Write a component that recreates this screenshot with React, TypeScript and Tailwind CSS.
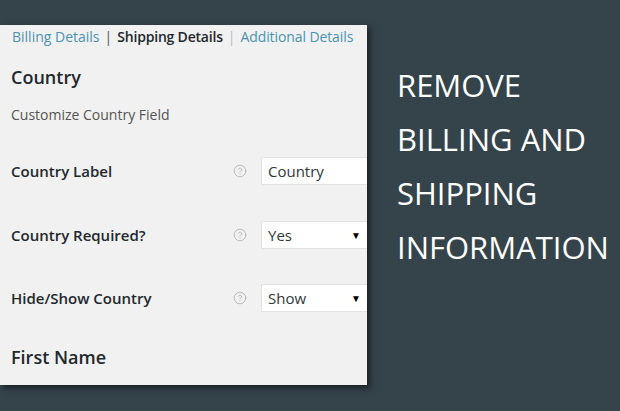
import { CircleHelp } from "lucide-react";

function HelpIcon() {
  return <CircleHelp className="w-[14px] h-[14px] text-[#b0b0b0]" strokeWidth={1.4} />;
}

function FieldRow({ label, value, select, className }: { label: string; value: string; select?: boolean; className: string }) {
  return (
    <div className={`flex items-center h-[28px] ${className}`}>
      <div className="w-[222px] shrink-0 text-[15px] font-semibold text-[#23282d]">{label}</div>
      <div className="w-[28px] shrink-0 flex items-center">
        <HelpIcon />
      </div>
      <div className="w-[200px] shrink-0 h-[28px] bg-white border border-[#e2e2e2] flex items-center justify-between pl-[6px] pr-[6px] text-[15px] text-[#32373c]">
        <span>{value}</span>
        {select && <span className="text-[10px] text-black mr-[93px]">▼</span>}
      </div>
    </div>
  );
}

export default function App() {
  return (
    <div className="w-[620px] h-[411px] bg-[#35434b] flex overflow-hidden" style={{ fontFamily: '"Open Sans", sans-serif' }}>
      <div className="w-[367px] h-[360px] mt-[25px] shrink-0 bg-[#f1f1f1] overflow-hidden shadow-[3px_3px_6px_rgba(0,0,0,0.55)] pl-[12px]">
        <div className="pt-[2px] h-[22px] leading-[20px] text-[14px] text-[#4b93b3] whitespace-nowrap">
          <span>Billing Details</span>
          <span className="text-[#555] mx-[5px]">|</span>
          <span className="font-semibold text-[#23282d] tracking-[-0.2px]">Shipping Details</span>
          <span className="text-[#bbb] mx-[5px]">|</span>
          <span className="tracking-[-0.1px]">Additional Details</span>
        </div>
        <div className="mt-[18px] -ml-[1px] text-[18px] leading-[24px] font-semibold text-[#23282d]">Country</div>
        <div className="mt-[16px] -ml-[1px] text-[14px] leading-[20px] text-[#555]">Customize Country Field</div>
        <FieldRow className="mt-[32px] -ml-[1px]" label="Country Label" value="Country" />
        <FieldRow className="mt-[36px] -ml-[1px]" label="Country Required?" value="Yes" select />
        <FieldRow className="mt-[35px] -ml-[1px]" label="Hide/Show Country" value="Show" select />
        <div className="mt-[33px] -ml-[1px] text-[18px] leading-[24px] font-semibold text-[#23282d]">First Name</div>
      </div>
      <div className="ml-[30px] pt-[58px] text-white text-[31px] leading-[54px] whitespace-nowrap">
        <div>REMOVE</div>
        <div>BILLING AND</div>
        <div>SHIPPING</div>
        <div>INFORMATION</div>
      </div>
    </div>
  );
}
